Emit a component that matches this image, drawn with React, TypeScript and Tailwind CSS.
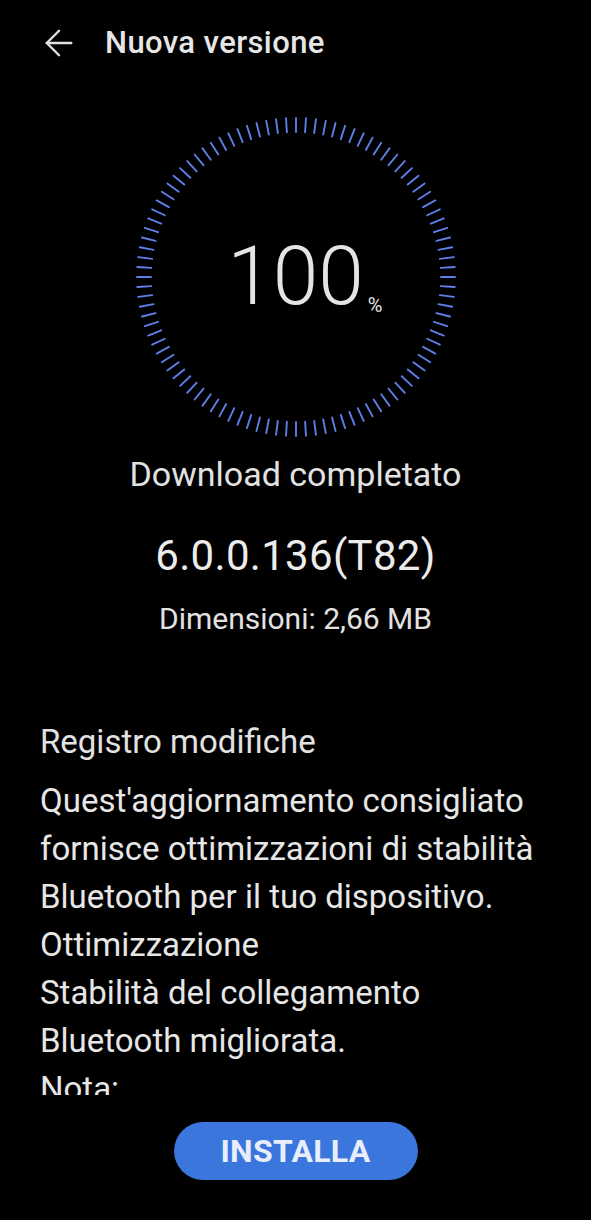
import { ArrowLeft } from 'lucide-react';

const TICKS = 100;

function ProgressRing() {
  const lines = [];
  for (let i = 0; i < TICKS; i++) {
    const a = (i / TICKS) * Math.PI * 2;
    const s = Math.sin(a);
    const c = Math.cos(a);
    lines.push(
      <line
        key={i}
        x1={160 + s * 145}
        y1={160 - c * 145}
        x2={160 + s * 159}
        y2={160 - c * 159}
      />
    );
  }
  return (
    <svg viewBox="0 0 320 320" className="absolute inset-0 w-full h-full">
      <g stroke="#5f7ee8" strokeWidth={1.9} strokeLinecap="round">
        {lines}
      </g>
    </svg>
  );
}

export default function App() {
  return (
    <div className="w-[591px] h-[1220px] bg-black text-[#e8e8e8] flex flex-col overflow-hidden font-['Roboto',sans-serif]">
      {/* Header */}
      <div className="h-[86px] flex items-center shrink-0">
        <ArrowLeft className="ml-[38px] w-[42px] h-[42px] text-[#e0e0e0]" strokeWidth={1.4} />
        <h1 className="ml-[25px] text-[31px] tracking-[0.4px] font-medium text-[#e6e6e6]">Nuova versione</h1>
      </div>

      {/* Ring */}
      <div className="relative mx-auto mt-[31px] w-[320px] h-[320px] shrink-0 flex items-center justify-center">
        <ProgressRing />
        <span className="relative text-[82px] leading-none font-light text-[#e4e4e4] -mt-[2px]">
          100
          <span className="absolute left-full bottom-[2px] ml-[4px] text-[20px] font-normal">%</span>
        </span>
      </div>

      <p className="mt-[17px] text-center text-[34px] leading-[40px] text-[#e2e2e2]">Download completato</p>
      <p className="mt-[38px] text-center text-[42px] leading-[48px] tracking-[0.3px] text-[#ececec]">6.0.0.136(T82)</p>
      <p className="mt-[21px] text-center text-[30px] leading-[36px] text-[#e2e2e2]">Dimensioni: 2,66 MB</p>

      {/* Changelog */}
      <div className="mt-[85px] h-[373px] overflow-hidden pl-[40px] pr-[36px] shrink-0">
        <h2 className="text-[33px] leading-[40px] text-[#e2e2e2]">Registro modifiche</h2>
        <div className="mt-[15px] text-[33px] leading-[48px] text-[#e6e6e6]">
          <p>Quest'aggiornamento consigliato fornisce ottimizzazioni di stabilità Bluetooth per il tuo dispositivo.</p>
          <p>Ottimizzazione</p>
          <p>Stabilità del collegamento Bluetooth migliorata.</p>
          <p>Nota:</p>
        </div>
      </div>

      <button className="mt-[27px] mx-auto w-[244px] h-[58px] rounded-full bg-[#3a76dc] text-[32px] tracking-[0.3px] font-bold text-[#e8eefc] shrink-0">
        INSTALLA
      </button>
    </div>
  );
}
